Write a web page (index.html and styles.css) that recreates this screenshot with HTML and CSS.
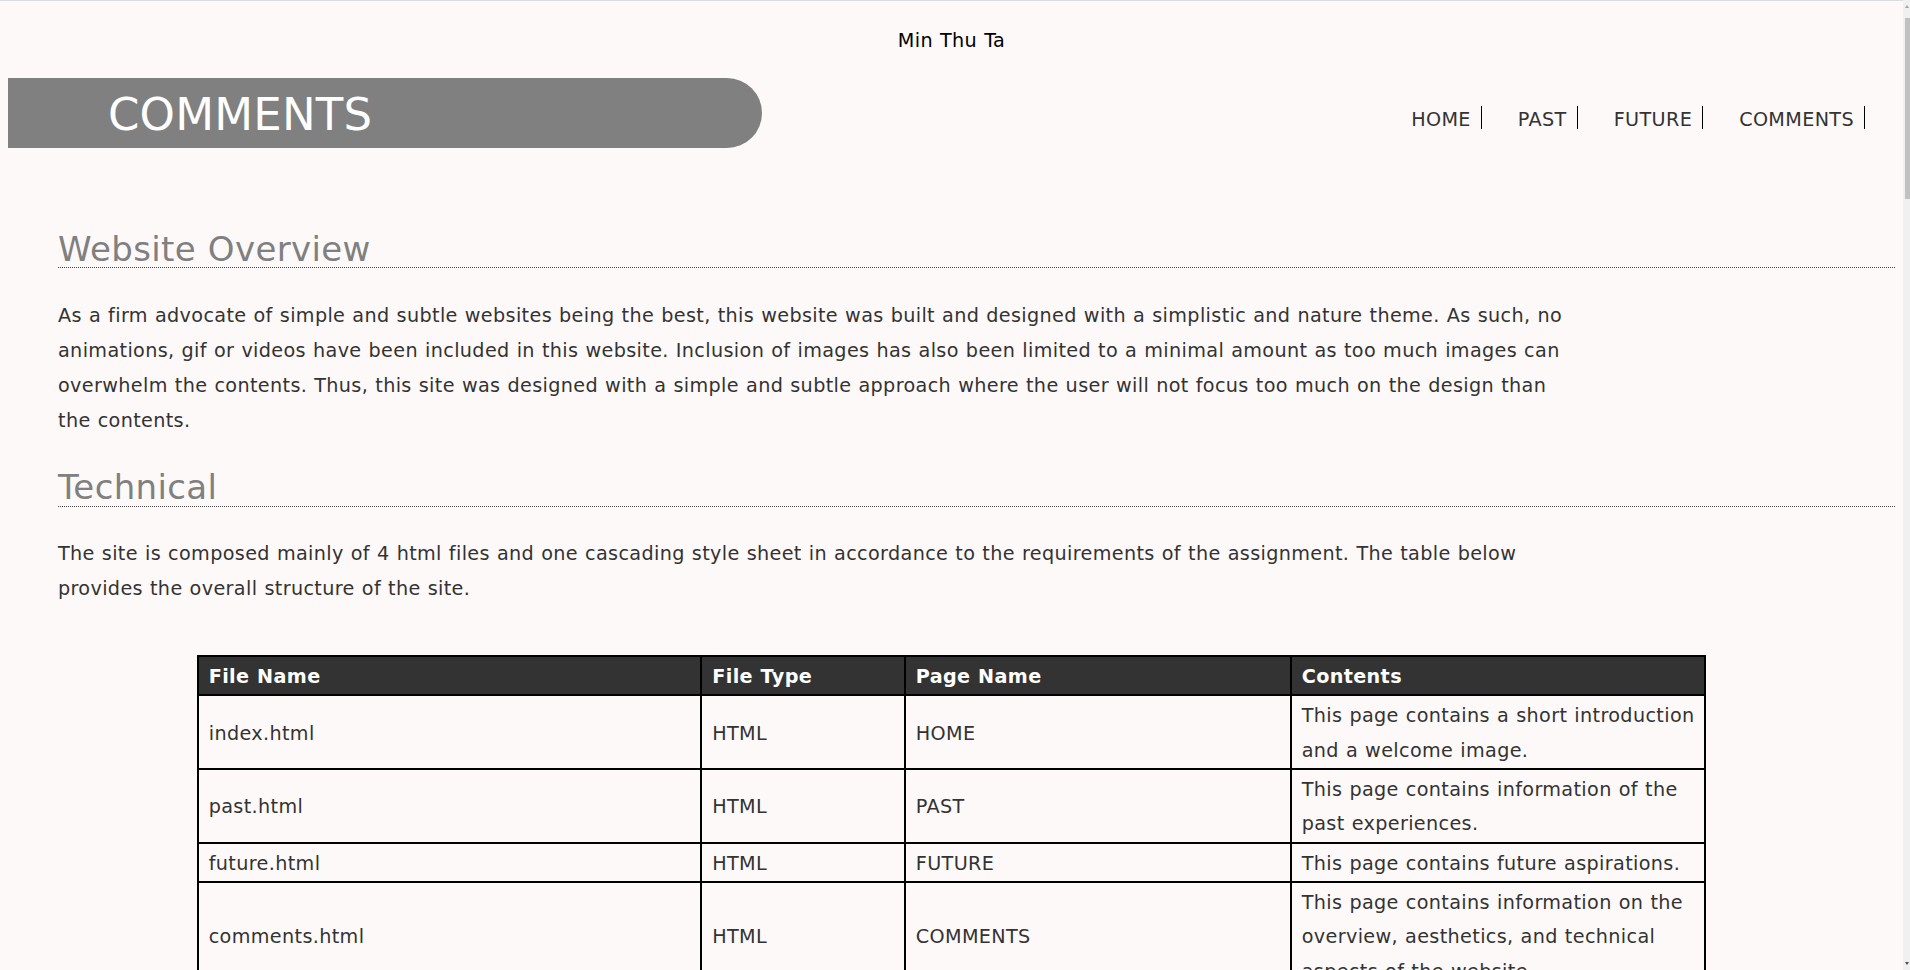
FILE: index.html
```html
<!DOCTYPE html>
<html lang="en">
<head>
<meta charset="utf-8">
<title>Comments</title>
<link rel="stylesheet" href="styles.css">
</head>
<body>
<header class="site-header">
  <p class="author">Min Thu Ta</p>
  <div class="masthead">
    <h1 class="banner">COMMENTS</h1>
    <nav class="nav">
      <a class="nav-link" href="#">HOME</a>
      <a class="nav-link" href="#">PAST</a>
      <a class="nav-link" href="#">FUTURE</a>
      <a class="nav-link" href="#">COMMENTS</a>
    </nav>
  </div>
</header>
<main class="content">
  <h2 class="section-title first">Website Overview</h2>
  <p class="text">As a firm advocate of simple and subtle websites being the best, this website was built and designed with a simplistic and nature theme. As such, no animations, gif or videos have been included in this website. Inclusion of images has also been limited to a minimal amount as too much images can overwhelm the contents. Thus, this site was designed with a simple and subtle approach where the user will not focus too much on the design than the contents.</p>
  <h2 class="section-title">Technical</h2>
  <p class="text">The site is composed mainly of 4 html files and one cascading style sheet in accordance to the requirements of the assignment. The table below provides the overall structure of the site.</p>
  <table class="structure">
    <colgroup>
      <col class="c1"><col class="c2"><col class="c3"><col class="c4">
    </colgroup>
    <thead>
      <tr><th>File Name</th><th>File Type</th><th>Page Name</th><th>Contents</th></tr>
    </thead>
    <tbody>
      <tr><td>index.html</td><td>HTML</td><td>HOME</td><td>This page contains a short introduction and a welcome image.</td></tr>
      <tr><td>past.html</td><td>HTML</td><td>PAST</td><td>This page contains information of the past experiences.</td></tr>
      <tr><td>future.html</td><td>HTML</td><td>FUTURE</td><td>This page contains future aspirations.</td></tr>
      <tr><td>comments.html</td><td>HTML</td><td>COMMENTS</td><td>This page contains information on the overview, aesthetics, and technical aspects of the website.</td></tr>
    </tbody>
  </table>
</main>
<div class="scrollbar" aria-hidden="true">
  <span class="scroll-arrow up"></span>
  <span class="scroll-thumb"></span>
  <span class="scroll-arrow down"></span>
</div>
</body>
</html>
```

FILE: styles.css
```css
html {
  background: #fdf9f8;
  border-top: 1px solid #dcdcdf;
}

body {
  margin: 0 15px 120px 8px;
  font-family: "DejaVu Sans", Verdana, sans-serif;
  font-size: 19.2px;
  letter-spacing: 0.36px;
  word-spacing: 0.6px;
  color: #333;
}

.author {
  margin: 0;
  padding-top: 27.5px;
  text-align: center;
  color: #000;
  line-height: normal;
}

.masthead {
  display: flex;
  justify-content: space-between;
  align-items: flex-start;
  margin-top: 26px;
}

.banner {
  box-sizing: border-box;
  width: 754px;
  height: 70px;
  margin: 0;
  padding: 4px 0 0 100px;
  background: #808080;
  border-radius: 0 35px 35px 0;
  color: #fff;
  font-size: 45px;
  letter-spacing: 0.2px;
  font-weight: normal;
  line-height: 66px;
}

.nav {
  display: flex;
  margin: 28px 30px 0 0;
}

.nav-link {
  margin-left: 36px;
  padding: 4.5px 10px 0 0;
  border-right: 1px solid #000;
  color: #333;
  text-decoration: none;
  line-height: 19px;
}

.section-title {
  margin: 32.7px 0 29.5px 50px;
  font-size: 34px;
  font-weight: normal;
  line-height: 35.5px;
  color: #808080;
  border-bottom: 1px dotted #444;
}

.section-title.first {
  margin-top: 84px;
}

.text {
  width: 80%;
  margin: 0 0 0 50px;
  line-height: 35px;
}

.structure {
  width: 80%;
  margin: 49px auto 0;
  table-layout: fixed;
  border-collapse: separate;
  border-spacing: 0;
  border: 1px solid #000;
  line-height: 34.3px;
}

.c1 { width: 33.4%; }
.c2 { width: 13.5%; }
.c3 { width: 25.6%; }
.c4 { width: 27.5%; }

.structure th,
.structure td {
  padding: 3px 4px 0 10px;
  border: 1px solid #000;
  text-align: left;
  vertical-align: middle;
}

.structure th {
  background: #333;
  color: #fff;
  font-weight: bold;
}

.scrollbar {
  position: fixed;
  top: 0;
  right: 0;
  width: 7px;
  height: 100vh;
  background: #f0f0f0;
}

.scroll-thumb {
  position: absolute;
  top: 18px;
  right: 0;
  width: 5px;
  height: 181px;
  background: #c1c1c1;
}

.scroll-arrow {
  position: absolute;
  right: 1px;
  width: 0;
  height: 0;
  border-left: 2px solid transparent;
  border-right: 2px solid transparent;
}

.scroll-arrow.up {
  top: 5px;
  border-bottom: 3px solid #a3a3a3;
}

.scroll-arrow.down {
  bottom: 5px;
  border-top: 3px solid #505050;
}
```
